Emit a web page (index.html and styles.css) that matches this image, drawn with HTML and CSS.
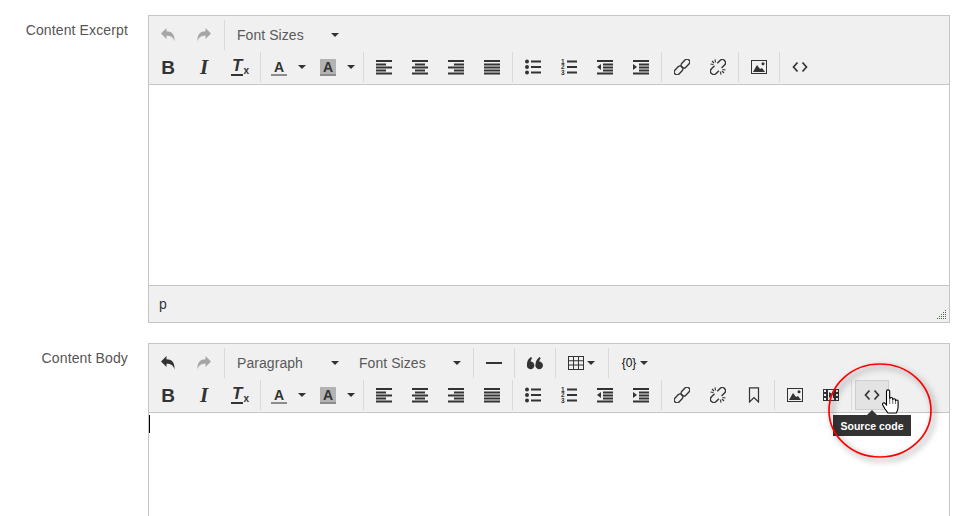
FILE: index.html
```html
<!DOCTYPE html>
<html lang="en">
<head>
<meta charset="utf-8">
<title>Editor</title>
<link rel="stylesheet" href="styles.css">
</head>
<body>
<svg class="sprite" width="0" height="0" aria-hidden="true">
  <symbol id="i-undo" viewBox="0 0 16 16"><path d="M1 6.500 6.500 1v3.200c5 0 8.500 2.600 8 10.300-1.200-4.500-3.600-5.800-8-5.800V12z"/></symbol>
  <symbol id="i-redo" viewBox="0 0 16 16"><path d="M15 6.500 9.500 1v3.200c-5 0-8.500 2.600-8 10.300 1.200-4.500 3.600-5.800 8-5.800V12z"/></symbol>
  <symbol id="i-left" viewBox="0 0 16 16"><path d="M0 1h16v2H0zM0 4.500h10v2H0zM0 7.500h16v2H0zM0 10.500h10v2H0zM0 13.500h16v2H0z"/></symbol>
  <symbol id="i-center" viewBox="0 0 16 16"><path d="M0 1h16v2H0zM3 4.500h10v2H3zM0 7.500h16v2H0zM3 10.500h10v2H3zM0 13.500h16v2H0z"/></symbol>
  <symbol id="i-right" viewBox="0 0 16 16"><path d="M0 1h16v2H0zM6 4.500h10v2H6zM0 7.500h16v2H0zM6 10.500h10v2H6zM0 13.500h16v2H0z"/></symbol>
  <symbol id="i-just" viewBox="0 0 16 16"><path d="M0 1h16v2H0zM0 4.500h16v2H0zM0 7.500h16v2H0zM0 10.500h16v2H0zM0 13.500h16v2H0z"/></symbol>
  <symbol id="i-bullet" viewBox="0 0 16 16"><circle cx="2" cy="2.500" r="2"/><circle cx="2" cy="8" r="2"/><circle cx="2" cy="13.500" r="2"/><path d="M6 1.500h10v2H6zM6 7h10v2H6zM6 12.500h10v2H6z"/></symbol>
  <symbol id="i-lines" viewBox="0 0 10 16"><path d="M0 1.500h10v2H0zM0 7h10v2H0zM0 12.500h10v2H0z"/></symbol>
  <symbol id="i-outdent" viewBox="0 0 16 16"><path d="M0 1h16v2H0zM6 4.500h10v2H6zM6 7.500h10v2H6zM6 10.500h10v2H6zM0 13.500h16v2H0zM4 5v6L0 8z"/></symbol>
  <symbol id="i-indent" viewBox="0 0 16 16"><path d="M0 1h16v2H0zM6 4.500h10v2H6zM6 7.500h10v2H6zM6 10.500h10v2H6zM0 13.500h16v2H0zM0 5v6l4-3z"/></symbol>
  <symbol id="i-link" viewBox="0 0 16 16"><g fill="none" stroke="currentColor" stroke-width="1.400"><rect x="-5" y="-2.800" width="10" height="5.600" rx="2.800" transform="translate(4.600 11.400) rotate(-45)"/><rect x="-5" y="-2.800" width="10" height="5.600" rx="2.800" transform="translate(11.400 4.600) rotate(-45)"/></g></symbol>
  <symbol id="i-unlink" viewBox="0 0 16 16"><g fill="none" stroke="currentColor" stroke-width="1.400"><path d="M4.500 6.800 1.500 9.800a3.100 3.100 0 0 0 4.700 4.700l2.700-2.800"/><path d="M7.300 4.300 10 1.500a3.100 3.100 0 0 1 4.500 4.500L11.600 9"/></g><path fill="none" stroke="currentColor" stroke-width="1.100" d="M5 .3l.5 3M.5 5l3 .5M2 2l2 2M11 15.700l-.5-3M15.500 11l-3-.5M14 14l-2-2"/></symbol>
  <symbol id="i-image" viewBox="0 0 16 16"><path fill-rule="evenodd" d="M0 1h16v14H0zM1 2v12h14V2z"/><path d="M2 13 6 6l3 4 2-1 3 4z"/><circle cx="12" cy="4.800" r="1.500"/></symbol>
  <symbol id="i-media" viewBox="0 0 16 16"><path fill-rule="evenodd" d="M0 2h16v12H0zM1 3v2h2V3zM5 3v10h6V3zM13 3v2h2V3zM1 7v2h2V7zM13 7v2h2V7zM1 11v2h2v-2zM13 11v2h2v-2z"/><path d="M6 5v6l4-3.500V11h1V5h-1v2.500z"/></symbol>
  <symbol id="i-bookmark" viewBox="0 0 16 16"><path fill="none" stroke="currentColor" stroke-width="1.200" d="M3.500 .8h9v14.200L8 10.500 3.500 15z"/></symbol>
  <symbol id="i-code" viewBox="0 0 16 16"><path fill="none" stroke="currentColor" stroke-width="1.700" d="M5.500 3.500 1.500 8l4 4.500M10.500 3.500l4 4.500-4 4.500"/></symbol>
  <symbol id="i-hr" viewBox="0 0 16 16"><path d="M0 7h16v2H0z"/></symbol>
  <symbol id="i-quote" viewBox="0 0 16 16"><path d="M4 2C1.300 3.700 0 6.300-.2 10a3.800 3.800 0 1 0 3.800-3.400C3.800 5.300 4.500 3.800 5.200 3.200zM12.600 2C10 3.700 8.600 6.300 8.400 10a3.800 3.800 0 1 0 3.800-3.400c.2-1.300.9-2.800 1.600-3.400z"/></symbol>
  <symbol id="i-table" viewBox="0 0 16 16"><path fill-rule="evenodd" d="M0 1h16v14H0zM1 2v3.300h4V2zM6 2v3.300h4V2zM11 2v3.300h4V2zM1 6.300v3.300h4V6.300zM6 6.300v3.300h4V6.300zM11 6.300v3.300h4V6.300zM1 10.600V14h4v-3.400zM6 10.600V14h4v-3.400zM11 10.600V14h4v-3.400z"/></symbol>
</svg>

<main class="page">
  <section class="field">
    <label class="field-label">Content Excerpt</label>
    <div class="editor">
      <div class="toolbar">
        <div class="tb-row">
          <div class="group first">
            <span class="btn off"><svg class="ic"><use href="#i-undo"/></svg></span>
            <span class="btn off"><svg class="ic"><use href="#i-redo"/></svg></span>
          </div>
          <div class="group">
            <span class="list">Font Sizes<i class="caret"></i></span>
          </div>
        </div>
        <div class="tb-row">
          <div class="group first">
            <span class="btn glyph bold">B</span>
            <span class="btn glyph ital">I</span>
            <span class="btn glyph"><span class="clear">T</span><span class="clear-x">x</span></span>
          </div>
          <div class="group">
            <span class="split"><span class="color-a">A</span><i class="caret"></i></span>
            <span class="split"><span class="color-a fill">A</span><i class="caret"></i></span>
          </div>
          <div class="group">
            <span class="btn"><svg class="ic"><use href="#i-left"/></svg></span>
            <span class="btn"><svg class="ic"><use href="#i-center"/></svg></span>
            <span class="btn"><svg class="ic"><use href="#i-right"/></svg></span>
            <span class="btn"><svg class="ic"><use href="#i-just"/></svg></span>
          </div>
          <div class="group">
            <span class="btn"><svg class="ic"><use href="#i-bullet"/></svg></span>
            <span class="btn"><span class="digits">1<br>2<br>3</span><svg class="ic-lines"><use href="#i-lines"/></svg></span>
            <span class="btn"><svg class="ic"><use href="#i-outdent"/></svg></span>
            <span class="btn"><svg class="ic"><use href="#i-indent"/></svg></span>
          </div>
          <div class="group">
            <span class="btn"><svg class="ic"><use href="#i-link"/></svg></span>
            <span class="btn"><svg class="ic"><use href="#i-unlink"/></svg></span>
          </div>
          <div class="group">
            <span class="btn"><svg class="ic"><use href="#i-image"/></svg></span>
          </div>
          <div class="group">
            <span class="btn"><svg class="ic"><use href="#i-code"/></svg></span>
          </div>
        </div>
      </div>
      <div class="edit-area"></div>
      <div class="statusbar">
        <span>p</span>
        <svg class="grip" width="10" height="10" viewBox="0 0 10 10"><path d="M8 0h1v1H8zM8 2h1v1H8zM6 2h1v1H6zM8 4h1v1H8zM6 4h1v1H6zM4 4h1v1H4zM8 6h1v1H8zM6 6h1v1H6zM4 6h1v1H4zM2 6h1v1H2zM8 8h1v1H8zM6 8h1v1H6zM4 8h1v1H4zM2 8h1v1H2zM0 8h1v1H0z"/></svg>
      </div>
    </div>
  </section>

  <section class="field">
    <label class="field-label">Content Body</label>
    <div class="editor open">
      <div class="toolbar">
        <div class="tb-row">
          <div class="group first">
            <span class="btn"><svg class="ic"><use href="#i-undo"/></svg></span>
            <span class="btn off"><svg class="ic"><use href="#i-redo"/></svg></span>
          </div>
          <div class="group">
            <span class="list">Paragraph<i class="caret"></i></span>
            <span class="list">Font Sizes<i class="caret"></i></span>
          </div>
          <div class="group">
            <span class="btn"><svg class="ic"><use href="#i-hr"/></svg></span>
          </div>
          <div class="group">
            <span class="btn"><svg class="ic"><use href="#i-quote"/></svg></span>
          </div>
          <div class="group">
            <span class="drop"><svg class="ic"><use href="#i-table"/></svg><i class="caret near"></i></span>
          </div>
          <div class="group">
            <span class="drop"><span class="tpl">{0}</span><i class="caret near"></i></span>
          </div>
        </div>
        <div class="tb-row">
          <div class="group first">
            <span class="btn glyph bold">B</span>
            <span class="btn glyph ital">I</span>
            <span class="btn glyph"><span class="clear">T</span><span class="clear-x">x</span></span>
          </div>
          <div class="group">
            <span class="split"><span class="color-a">A</span><i class="caret"></i></span>
            <span class="split"><span class="color-a fill">A</span><i class="caret"></i></span>
          </div>
          <div class="group">
            <span class="btn"><svg class="ic"><use href="#i-left"/></svg></span>
            <span class="btn"><svg class="ic"><use href="#i-center"/></svg></span>
            <span class="btn"><svg class="ic"><use href="#i-right"/></svg></span>
            <span class="btn"><svg class="ic"><use href="#i-just"/></svg></span>
          </div>
          <div class="group">
            <span class="btn"><svg class="ic"><use href="#i-bullet"/></svg></span>
            <span class="btn"><span class="digits">1<br>2<br>3</span><svg class="ic-lines"><use href="#i-lines"/></svg></span>
            <span class="btn"><svg class="ic"><use href="#i-outdent"/></svg></span>
            <span class="btn"><svg class="ic"><use href="#i-indent"/></svg></span>
          </div>
          <div class="group">
            <span class="btn"><svg class="ic"><use href="#i-link"/></svg></span>
            <span class="btn"><svg class="ic"><use href="#i-unlink"/></svg></span>
            <span class="btn"><svg class="ic"><use href="#i-bookmark"/></svg></span>
          </div>
          <div class="group">
            <span class="btn"><svg class="ic"><use href="#i-image"/></svg></span>
            <span class="btn"><svg class="ic"><use href="#i-media"/></svg></span>
          </div>
          <div class="group">
            <span class="btn hover">
              <svg class="ic"><use href="#i-code"/></svg>
              <span class="tooltip">Source code</span>
              <svg class="hand" width="17" height="25" viewBox="0 0 17 25"><path d="M4.500 14V2.500a1.600 1.600 0 0 1 3.200 0V10a1.500 1.500 0 0 1 3 0v1a1.400 1.400 0 0 1 2.800 .3v.9a1.300 1.300 0 0 1 2.600 .3V18q0 3-1.800 6H6q-1.500-2-3-4L.8 16q-.8-2.300 1.500-2.300L4.500 16z"/><path class="finger" d="M7.700 10v5M10.700 11v4M13.500 12v3"/></svg>
            </span>
          </div>
        </div>
      </div>
      <div class="edit-area clipped"><span class="text-caret"></span></div>
    </div>
  </section>

  <svg class="annotation" width="124" height="112" viewBox="0 0 124 112"><ellipse cx="56" cy="52.500" rx="51" ry="46.500"/></svg>
</main>
</body>
</html>
```
FILE: styles.css
```css
html, body {
  margin: 0;
  height: 516px;
  overflow: hidden;
  background: #fff;
}

body {
  font-family: "Liberation Sans", Arial, sans-serif;
  font-size: 14px;
  color: #333;
}

.sprite {
  position: absolute;
}

.page {
  position: relative;
  display: flex;
  flex-direction: column;
  gap: 20px;
  height: 516px;
  padding-top: 15px;
  box-sizing: border-box;
}

.field {
  display: flex;
  gap: 20px;
  align-items: flex-start;
}

.field-label {
  width: 128px;
  flex: none;
  padding-top: 7px;
  line-height: 16px;
  text-align: right;
  letter-spacing: .13px;
  color: #555;
}

.editor {
  width: 802px;
  flex: none;
  box-sizing: border-box;
  border: 1px solid #c5c5c5;
  background: #fff;
}

.editor.open {
  border-bottom: 0;
}

.toolbar {
  height: 64px;
  padding: 4px 0 0 1px;
  background: #f0f0f0;
  border-bottom: 1px solid #c5c5c5;
}

.tb-row {
  display: flex;
  height: 30px;
  margin-bottom: 2px;
}

.group {
  display: flex;
  align-items: stretch;
  margin-left: 2px;
  padding-left: 2px;
  border-left: 1px solid #d9d9d9;
}

.group.first {
  margin-left: 0;
  padding-left: 0;
  border-left: 0;
}

.btn {
  position: relative;
  display: flex;
  align-items: center;
  justify-content: center;
  width: 36px;
  box-sizing: border-box;
  color: #333;
}

.btn.off {
  color: #a6a6a6;
}

.ic {
  width: 16px;
  height: 16px;
  fill: currentColor;
  display: block;
}

.ic-lines {
  width: 10px;
  height: 16px;
  margin-left: 1px;
  fill: currentColor;
  display: block;
}

.digits {
  width: 5px;
  font-size: 6.500px;
  font-weight: 700;
  line-height: 5.500px;
  text-align: left;
}

.glyph {
  font-size: 18px;
  line-height: 1;
}

.bold {
  font-weight: 700;
  font-size: 19px;
}

.ital {
  font-family: "Liberation Serif", serif;
  font-style: italic;
  font-weight: 700;
  font-size: 21px;
}

.clear {
  font-family: "Liberation Sans", Arial, sans-serif;
  font-style: italic;
  font-weight: 700;
  font-size: 17px;
  border-bottom: 2px solid #333;
  line-height: 16px;
  padding: 0 1px;
  margin-left: -4px;
}

.clear-x {
  font-size: 10px;
  font-weight: 700;
  align-self: flex-end;
  margin: 0 -4px 6px 0;
}

.caret {
  display: block;
  width: 0;
  height: 0;
  border-top: 4px solid #333;
  border-left: 4px solid transparent;
  border-right: 4px solid transparent;
}

.list {
  display: flex;
  align-items: center;
  justify-content: space-between;
  width: 122px;
  box-sizing: border-box;
  padding: 0 10px;
  letter-spacing: .06px;
  color: #595959;
}

.split {
  display: flex;
  align-items: center;
  width: 49px;
  box-sizing: border-box;
  padding-left: 8px;
}

.split .caret {
  margin-left: 11px;
}

.color-a {
  display: block;
  width: 16px;
  height: 17px;
  box-sizing: border-box;
  border-bottom: 2px solid #8c8c8c;
  font-size: 14px;
  font-weight: 700;
  line-height: 17px;
  text-align: center;
  color: #333;
}

.color-a.fill {
  background: #b3b3b3;
}

.drop {
  display: flex;
  align-items: center;
  width: 48px;
  box-sizing: border-box;
  padding-left: 10px;
}

.caret.near {
  margin-left: 3px;
}

.tpl {
  width: 16px;
  font-size: 12px;
  color: #111;
  text-align: center;
  white-space: nowrap;
}

.hover::before {
  content: "";
  position: absolute;
  inset: 0 1px;
  background: #e3e3e3;
  border: 1px solid #cfcfcf;
}

.hover .ic {
  position: relative;
}

.tooltip {
  position: absolute;
  left: -21px;
  top: 35px;
  width: 78px;
  height: 21px;
  background: #333;
  color: #fff;
  font-size: 10.500px;
  font-weight: 700;
  line-height: 22px;
  text-align: center;
  white-space: nowrap;
}

.tooltip::before {
  content: "";
  position: absolute;
  left: 34px;
  top: -5px;
  border-bottom: 5px solid #333;
  border-left: 5px solid transparent;
  border-right: 5px solid transparent;
}

.hand {
  position: absolute;
  left: 28px;
  top: 9px;
  fill: #fff;
  stroke: #000;
  stroke-width: 1.100;
}

.hand .finger {
  fill: none;
  stroke: #777;
}

.edit-area {
  height: 200px;
  background: #fff;
}

.edit-area.clipped {
  height: 103px;
}

.text-caret {
  display: block;
  width: 1px;
  height: 18px;
  background: #000;
  transform: translateY(2px);
}

.statusbar {
  position: relative;
  display: flex;
  align-items: center;
  height: 36px;
  padding-left: 10px;
  background: #f0f0f0;
  border-top: 1px solid #c5c5c5;
  color: #333;
}

.grip {
  position: absolute;
  right: 2px;
  bottom: 2px;
  fill: #4f6a4f;
}

.annotation {
  position: absolute;
  left: 824px;
  top: 358px;
  fill: none;
  stroke: #f00;
  stroke-width: 1.700;
  filter: drop-shadow(3px 3px 3px rgba(0, 0, 0, .55));
  pointer-events: none;
}
```
